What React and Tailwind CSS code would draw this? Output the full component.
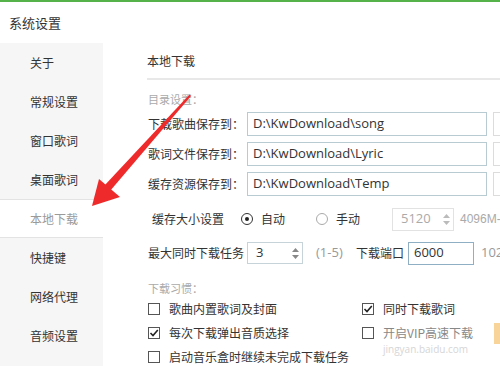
import React from "react";

function Check({ checked }) {
  return (
    <span className="w-[12px] h-[12px] border border-[#555] bg-white flex items-center justify-center shrink-0">
      {checked && (
        <svg width="10" height="10" viewBox="0 0 10 10">
          <path d="M1.5 5 L4 7.5 L8.8 2" stroke="#222" strokeWidth="1.6" fill="none" />
        </svg>
      )}
    </span>
  );
}

function Spin({ up = "#777" }) {
  return (
    <span className="flex flex-col items-center gap-[3px] mr-[3px]">
      <svg width="7" height="4" viewBox="0 0 7 4"><path d="M0 4 L3.5 0 L7 4Z" fill={up} /></svg>
      <svg width="7" height="4" viewBox="0 0 7 4"><path d="M0 0 L3.5 4 L7 0Z" fill={up} /></svg>
    </span>
  );
}

const side = ["关于", "常规设置", "窗口歌词", "桌面歌词", "本地下载", "快捷键", "网络代理", "音频设置"];

export default function App() {
  return (
    <div className="relative w-[500px] h-[366px] overflow-hidden bg-white text-[#333] font-['Noto_Sans_CJK_SC',sans-serif] whitespace-nowrap">
      <div className="h-[2px] bg-[#55b14a]" />
      <div className="h-[41px] flex items-center pl-[9px] text-[13px]">系统设置</div>
      <div className="flex">
        <div className="w-[103px] shrink-0 bg-[#f6f6f6] h-[323px]">
          {side.map((s, i) =>
            i === 4 ? (
              <div key={s} className="h-[39px] flex items-center pl-[30px] text-[12px] text-[#9a9a9a] bg-white border-y border-[#e3e3e3]">{s}</div>
            ) : (
              <div key={s} className="h-[39px] flex items-center pl-[30px] text-[12px]">{s}</div>
            )
          )}
        </div>
        <div className="flex-1 pl-[44px] text-[12px]">
          <div className="h-[35px] flex items-center">本地下载</div>
          <div className="h-[2px] bg-[#e8e8e8] w-[400px]" />
          <div className="pl-[1px]">
            <div className="mt-[11px] h-[16px] flex items-center text-[11px] text-[#aaa]">目录设置：</div>
            <div className="mt-[5px] flex flex-col gap-[6px]">
              {[
                ["下载歌曲保存到：", "D:\\KwDownload\\song"],
                ["歌词文件保存到：", "D:\\KwDownload\\Lyric"],
                ["缓存资源保存到：", "D:\\KwDownload\\Temp"],
              ].map(([l, v]) => (
                <div key={l} className="h-[24px] flex items-center">
                  <span className="w-[99px] shrink-0">{l}</span>
                  <div className="w-[240px] h-[24px] shrink-0 border border-[#b8cad2] flex items-center pl-[5px] text-[13px] font-['Open_Sans',sans-serif] text-[#333]">{v}</div>
                  <div className="ml-[6px] w-[40px] h-[24px] shrink-0 border border-[#dcdcdc]" />
                </div>
              ))}
            </div>
            <div className="mt-[11px] h-[24px] flex items-center">
              <span className="ml-[4px] w-[89px] shrink-0">缓存大小设置</span>
              <span className="w-[12px] h-[12px] rounded-full border border-[#333] flex items-center justify-center shrink-0">
                <span className="w-[4px] h-[4px] rounded-full bg-[#222]" />
              </span>
              <span className="ml-[8px] w-[55px] shrink-0">自动</span>
              <span className="w-[12px] h-[12px] rounded-full border border-[#aaa] shrink-0" />
              <span className="ml-[8px] w-[56px] shrink-0">手动</span>
              <div className="w-[62px] h-[23px] shrink-0 border border-[#e2e2e2] flex items-center justify-between pl-[8px] text-[13px] font-['Open_Sans',sans-serif] text-[#aaa]">
                5120
                <Spin up="#bbb" />
              </div>
              <span className="ml-[6px] text-[12px] font-['Liberation_Sans',sans-serif] text-[#aaa]">4096M-</span>
            </div>
            <div className="mt-[10px] h-[24px] flex items-center">
              <span className="w-[99px] shrink-0">最大同时下载任务</span>
              <div className="w-[56px] h-[22px] shrink-0 border border-[#c6d3d9] flex items-center justify-between pl-[8px] text-[13px] font-['Open_Sans',sans-serif]">
                3
                <Spin up="#888" />
              </div>
              <span className="ml-[13px] w-[40px] text-[13px] font-['Open_Sans',sans-serif] text-[#999]">(1-5)</span>
              <span className="w-[52px] shrink-0">下载端口</span>
              <div className="w-[66px] h-[23px] shrink-0 border border-[#8fb0c4] flex items-center pl-[5px] text-[13px] font-['Open_Sans',sans-serif]">6000</div>
              <span className="ml-[7px] text-[13px] font-['Open_Sans',sans-serif] text-[#999]">102</span>
            </div>
            <div className="mt-[15px] h-[16px] flex items-center text-[11px] text-[#aaa]">下载习惯：</div>
            <div className="mt-[1px]">
              <div className="h-[24px] flex items-center">
                <div className="w-[214px] flex items-center gap-[9px] shrink-0"><Check /><span>歌曲内置歌词及封面</span></div>
                <div className="flex items-center gap-[9px]"><Check checked /><span>同时下载歌词</span></div>
              </div>
              <div className="h-[24px] flex items-center">
                <div className="w-[214px] flex items-center gap-[9px] shrink-0"><Check checked /><span>每次下载弹出音质选择</span></div>
                <div className="flex items-center gap-[9px]"><Check /><span className="text-[#888]">开启VIP高速下载</span></div>
                <div className="ml-[21px] w-[20px] h-[21px] bg-[#f8d49b]" />
              </div>
              <div className="h-[24px] flex items-center">
                <div className="flex items-center gap-[9px]"><Check /><span>启动音乐盒时继续未完成下载任务</span></div>
              </div>
            </div>
          </div>
        </div>
      </div>
      <div className="absolute left-[383px] top-[342px] text-[10px] text-[#d6d6d6] font-['Open_Sans',sans-serif] pointer-events-none">jingyan.baidu.com</div>
      <svg className="absolute left-0 top-0 pointer-events-none" width="500" height="366" viewBox="0 0 500 366">
        <polygon points="189.5,94.5 191,96 110,191 104,186" fill="#ee2a2a" />
        <polygon points="92,206 99,179 120,197" fill="#ee2a2a" />
      </svg>
    </div>
  );
}
